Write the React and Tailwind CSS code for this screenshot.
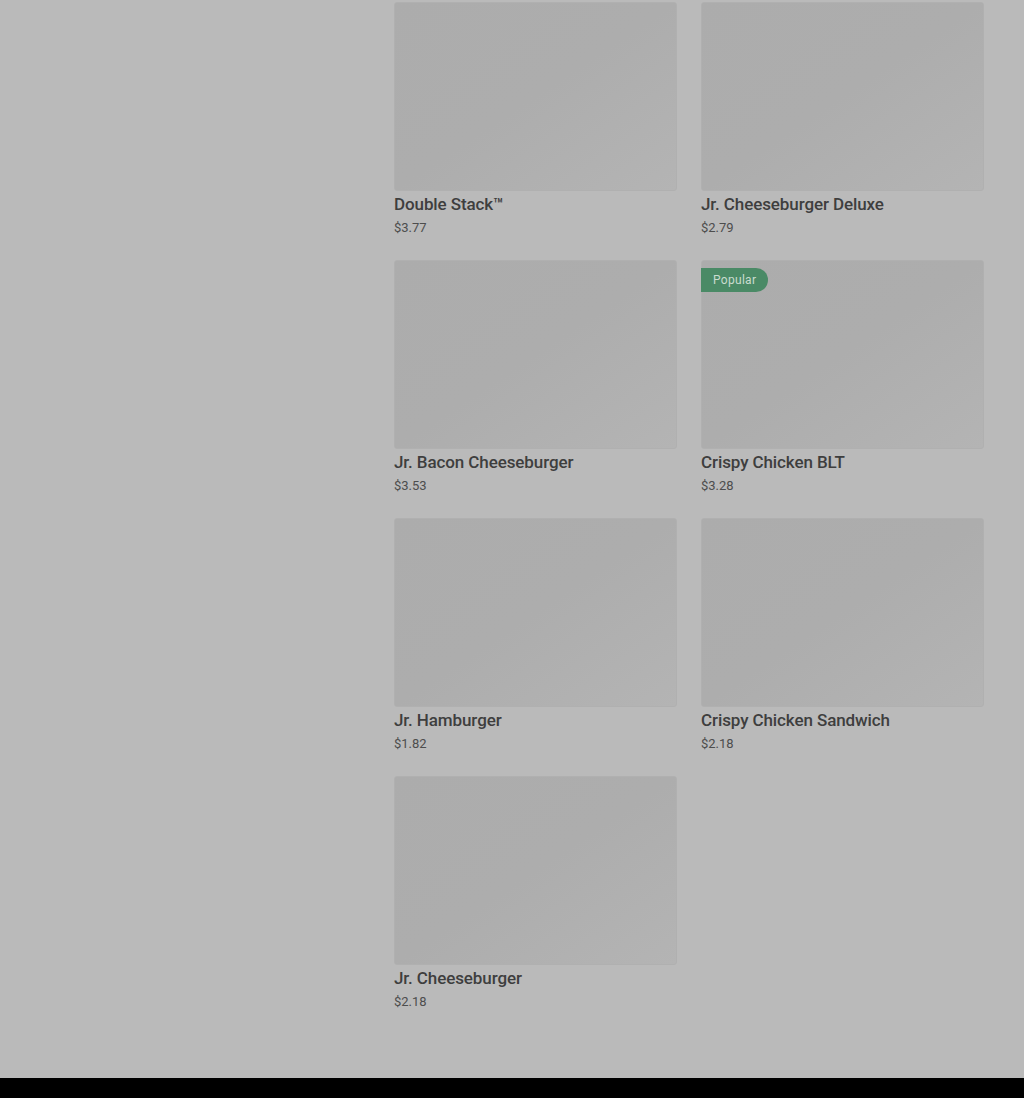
const items = [
  { name: "Double Stack™", price: "$3.77" },
  { name: "Jr. Cheeseburger Deluxe", price: "$2.79" },
  { name: "Jr. Bacon Cheeseburger", price: "$3.53" },
  { name: "Crispy Chicken BLT", price: "$3.28", popular: true },
  { name: "Jr. Hamburger", price: "$1.82" },
  { name: "Crispy Chicken Sandwich", price: "$2.18" },
  { name: "Jr. Cheeseburger", price: "$2.18" },
];

function MenuCard({ item }) {
  return (
    <div className="flex flex-col">
      <div className="relative h-[189px] w-full rounded-[3px] border border-[#b0b0b0] bg-gradient-to-br from-[#acacac] via-[#adadad] to-[#b4b4b4]">
        {item.popular && (
          <span className="absolute left-[-1px] top-[7px] h-[24px] px-[12px] flex items-center rounded-r-full bg-[#4a8a66] text-[#c9dccf] text-[12px] tracking-wide">
            Popular
          </span>
        )}
      </div>
      <div className="mt-[3px] text-[17px] leading-[20px] font-medium tracking-[-0.1px] text-[#3e3e3e]">{item.name}</div>
      <div className="mt-[5px] text-[13px] leading-[18px] text-[#4d4d4d]">{item.price}</div>
    </div>
  );
}

export default function App() {
  return (
    <div className="min-h-screen bg-[#bababa] font-['Roboto','Liberation_Sans',sans-serif]">
      <div className="flex pt-[2px] pb-[67px] pr-[40px]">
        <aside className="w-[394px] shrink-0" />
        <div className="grid grid-cols-2 gap-x-[24px] gap-y-[23px] w-[590px]">
          {items.map(item => (
            <MenuCard key={item.name} item={item} />
          ))}
        </div>
      </div>
      <footer className="h-[40px] bg-black" />
    </div>
  );
}
